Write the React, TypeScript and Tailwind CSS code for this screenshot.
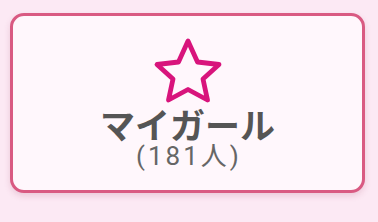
import React from 'react';

export default function App() {
  return (
    <div className="w-[378px] h-[222px] bg-[#fce9f4] pt-[13px] pl-[10px] font-['Noto_Sans_CJK_JP',sans-serif]">
      <div className="w-[355px] h-[180px] rounded-[14px] border-[3px] border-[#d95a82] bg-[#fff7fc] shadow-[0_3px_6px_rgba(160,60,100,0.18)] flex flex-col items-center pt-[21px]">
        <svg width="70" height="68" viewBox="0 0 70 68" className="block">
          <polygon
            points="35,4 44.5,25 66,27.5 50,42 54.5,63 35,52.5 15.5,63 20,42 4,27.5 25.5,25"
            fill="none"
            stroke="#d8147c"
            strokeWidth="4.8"
            strokeLinejoin="round"
          />
        </svg>
        <div className="mt-[1px] text-[35px] leading-[36px] font-bold text-[#555]">マイガール</div>
        <div className="pl-[3px] text-[26px] leading-[28px] tracking-[3px] text-[#666] font-['Roboto','Noto_Sans_CJK_JP',sans-serif]">(181人)</div>
      </div>
    </div>
  );
}
